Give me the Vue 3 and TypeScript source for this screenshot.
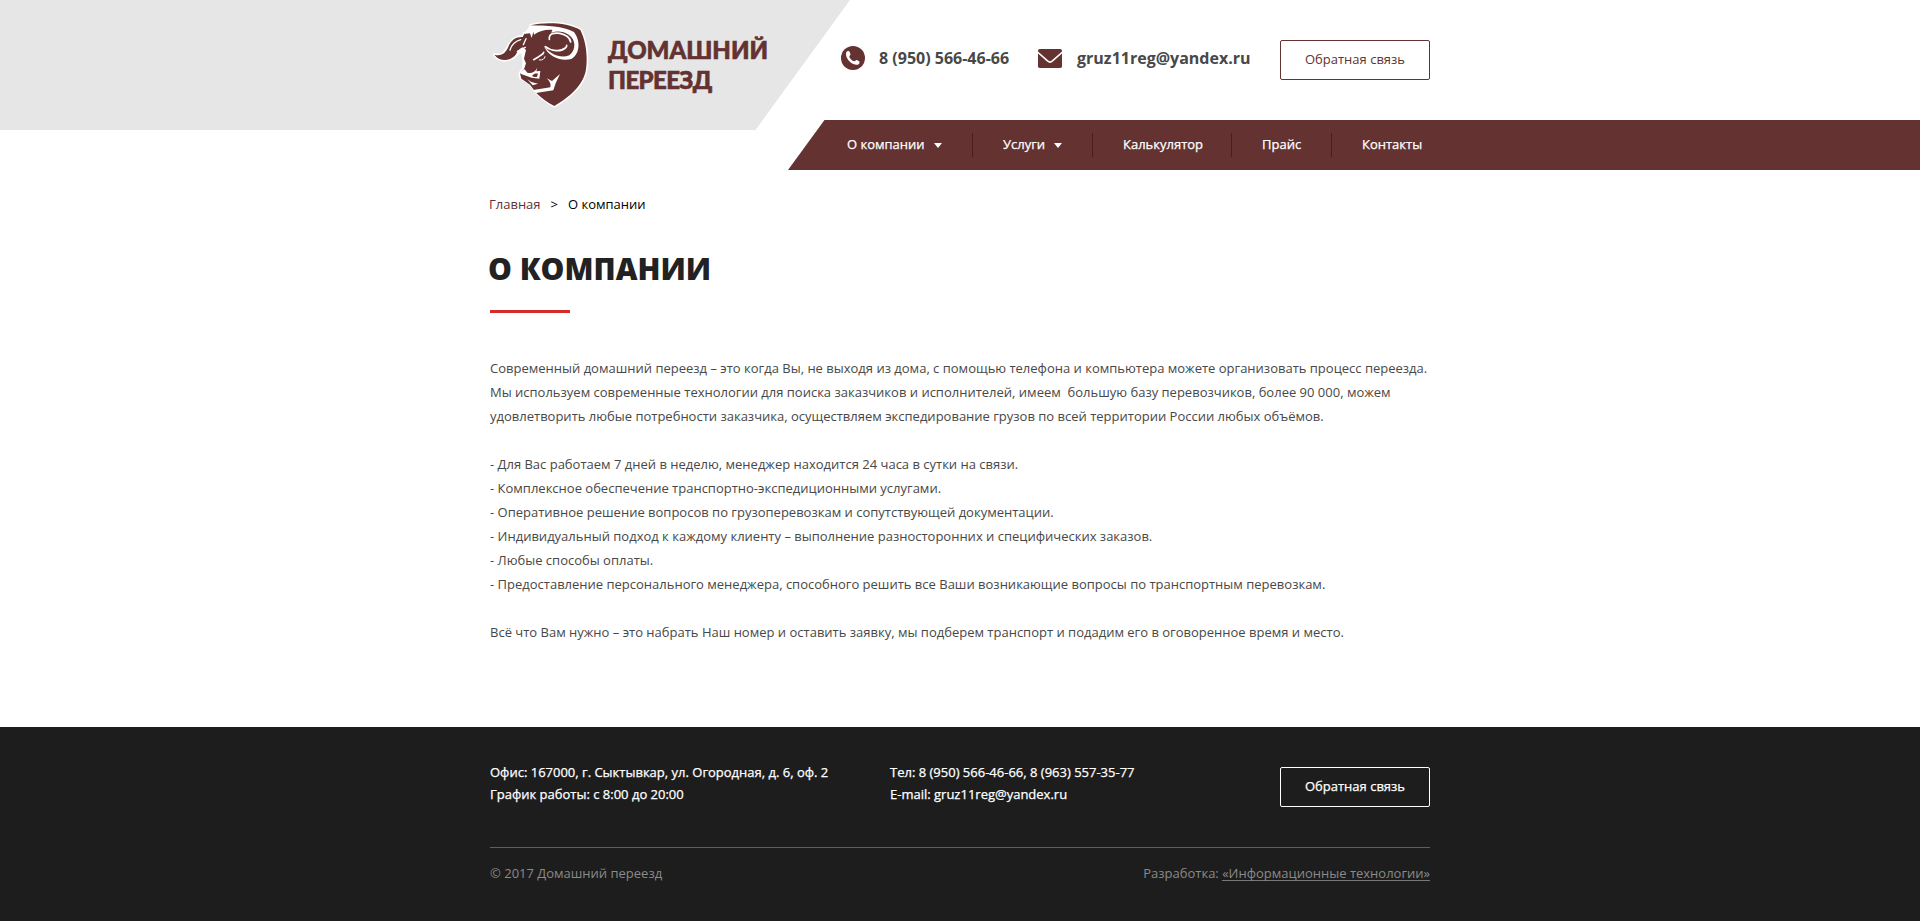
<script setup lang="ts">
interface NavItem { label: string; menu?: boolean; width: number }

const nav: NavItem[] = [
  { label: 'О компании', menu: true, width: 155 },
  { label: 'Услуги', menu: true, width: 120 },
  { label: 'Калькулятор', width: 139 },
  { label: 'Прайс', width: 100 },
  { label: 'Контакты', width: 120 },
]

const intro: string[] = [
  'Современный домашний переезд – это когда Вы, не выходя из дома, с помощью телефона и компьютера можете организовать процесс переезда.',
  'Мы используем современные технологии для поиска заказчиков и исполнителей, имеем\u00a0 большую базу перевозчиков, более 90 000, можем',
  'удовлетворить любые потребности заказчика, осуществляем экспедирование грузов по всей территории России любых объёмов.',
]

const points: string[] = [
  'Для Вас работаем 7 дней в неделю, менеджер находится 24 часа в сутки на связи.',
  'Комплексное обеспечение транспортно-экспедиционными услугами.',
  'Оперативное решение вопросов по грузоперевозкам и сопутствующей документации.',
  'Индивидуальный подход к каждому клиенту – выполнение разносторонних и специфических заказов.',
  'Любые способы оплаты.',
  'Предоставление персонального менеджера, способного решить все Ваши возникающие вопросы по транспортным перевозкам.',
]
</script>

<template>
  <div class="page">
    <header class="header">
      <div class="plate"></div>
      <div class="ribbon"></div>
      <div class="header-inner">
        <a class="logo">
          <svg class="bull" viewBox="0 0 360 330" width="120" height="110">
            <path fill="#fff" stroke="#fff" stroke-width="9" stroke-linejoin="round" d="M152 46C190 36 262 36 301 60C319 96 323 140 318 178C311 226 268 262 223 288C202 277 184 263 168 245L150 220L122 204L120 190L130 176L132 150L128 126L116 126C92 158 58 156 43 134C66 140 78 128 86 108C94 90 108 80 128 80L134 70L156 66Z" />
            <path fill="#633231" d="M152 46C190 36 262 36 301 60C319 96 323 140 318 178C311 226 268 262 223 288C202 277 184 263 168 248L150 224L124 206L120 190L132 178L138 160L132 146L138 120L128 112C118 116 112 126 106 136C88 156 56 154 43 134C66 140 78 128 86 108C94 90 108 80 128 81L134 70L156 66Z" />
            <path fill="#fff" d="M150 46C200 47 250 48 282 66C304 96 298 134 274 147C240 156 204 138 192 108C212 134 242 146 268 136C290 118 287 88 266 74C250 64 232 62 214 68C215 63 216 62 218 60C200 58 178 62 162 74L160 65L155 84L150 70L132 72Z" />
            <g fill="none" stroke="#fff" stroke-linecap="round" stroke-linejoin="round">
              <path stroke-width="5" d="M208 88C206 70 222 68 240 70C258 74 270 84 272 96" />
              <path stroke-width="5" d="M196 110C214 124 242 126 256 114Q261 110 260 106" />
              <path stroke-width="4" d="M90 120C94 106 106 94 122 89M138 86L130 104M112 124L136 112" />
              <path stroke-width="5" d="M161 149L176 140L188 132L191 127" />
              <path stroke-width="3" d="M178 150C188 151 194 147 195 140" />
            </g>
            <path fill="#fff" d="M118 187L134 178L142 188C154 192 164 187 172 173L169 184L181 183L178 206C164 206 146 202 134 196L123 192ZM142 208L154 216L174 221L158 226ZM168 249L160 240L211 232C214 222 208 212 200 205L216 213L240 192L227 220L220 241Z" />
            <path fill="#633231" d="M156 198C162 190 168 190 174 191L171 200C166 202 160 201 156 198Z" />
          </svg>
          <span class="logo-text">
            <span class="logo-top">ДОМАШНИЙ</span>
            <span class="logo-bottom">ПЕРЕЕЗД</span>
          </span>
        </a>
        <div class="right">
          <div class="contacts">
            <svg class="phone-icon" viewBox="0 0 24 24" width="24" height="24">
              <circle cx="12" cy="12" r="12" fill="#633231" />
              <path fill="#fff" d="M5.4 6C6 5.1 7.5 4.7 8.1 5.2C8.7 5.8 9.5 7.7 9.5 8.4C9.5 9.2 8.2 9.7 8.3 10.5C8.6 12.5 11.3 15 13.3 15.3C14.2 15.4 14.6 13.9 15.6 14C16.5 14.2 18.1 15.2 18.5 15.8C18.9 16.8 17.9 18.3 16.8 18.7C14.6 19.2 11.2 18.2 8.6 15.5C5.4 12.6 4.4 8.2 5.4 6Z" />
            </svg>
            <span class="phone">8 (950) 566-46-66</span>
            <svg class="mail-icon" viewBox="0 0 24 19" width="24" height="19">
              <rect width="24" height="19" rx="1.8" fill="#633231" />
              <path d="M-.5 3L9.5 11.8Q12 14.4 14.5 11.8L24.5 3" fill="none" stroke="#fff" stroke-width="1.6" />
            </svg>
            <span class="mail">gruz11reg@yandex.ru</span>
            <button class="btn" type="button">Обратная связь</button>
          </div>
          <nav class="nav">
            <a v-for="item in nav" :key="item.label" class="nav-item" :style="{ width: item.width + 'px' }">
              {{ item.label }}
              <svg v-if="item.menu" class="caret" width="8" height="5" viewBox="0 0 8 5"><path d="M0 0H8L4 5Z" fill="#fff" /></svg>
            </a>
          </nav>
        </div>
      </div>
    </header>

    <main class="main">
      <div class="crumbs"><a>Главная</a><span class="sep">&gt;</span><span>О компании</span></div>
      <h1>О КОМПАНИИ</h1>
      <div class="rule"></div>
      <div class="copy">
        <p><span v-for="line in intro" :key="line" class="line">{{ line }}</span></p>
        <p><span v-for="point in points" :key="point" class="line">- {{ point }}</span></p>
        <p><span class="line">Всё что Вам нужно – это набрать Наш номер и оставить заявку, мы подберем транспорт и подадим его в оговоренное время и место.</span></p>
      </div>
    </main>

    <footer class="footer">
      <div class="footer-inner">
        <div class="footer-top">
          <div class="office">Офис: 167000, г. Сыктывкар, ул. Огородная, д. 6, оф. 2<br>График работы: с 8:00 до 20:00</div>
          <div class="reach">Тел: 8 (950) 566-46-66, 8 (963) 557-35-77<br>E-mail: gruz11reg@yandex.ru</div>
          <button class="btn light" type="button">Обратная связь</button>
        </div>
        <div class="footer-bottom">
          <span>© 2017 Домашний переезд</span>
          <span>Разработка: <a class="dev">«Информационные технологии»</a></span>
        </div>
      </div>
    </footer>
  </div>
</template>

<style>
body { margin: 0; background: #fff; }
</style>

<style scoped>
.page {
  height: 921px;
  overflow: hidden;
  display: flex;
  flex-direction: column;
  font-family: "Open Sans", "Noto Sans", sans-serif;
  font-size: 13px;
  color: #484848;
}
.header { position: relative; height: 170px; flex: none; }
.plate {
  position: absolute; left: 0; top: 0; width: 850px; height: 130px;
  background: #e6e6e6;
  clip-path: polygon(0 0, 100% 0, 755.5px 100%, 0 100%);
}
.ribbon {
  position: absolute; left: 788px; right: 0; top: 120px; height: 50px;
  background: #633231;
  clip-path: polygon(36.5px 0, 100% 0, 100% 100%, 0 100%);
}
.header-inner, .main, .footer-inner { width: 940px; margin: 0 auto; }
.header-inner { position: relative; display: flex; }
.logo { display: flex; width: 328px; color: #633231; }
.bull { margin: 10px 8px 0 -10px; flex: none; }
.logo-text {
  padding-top: 35px;
  font: 900 24px/30px Lato, "Open Sans", sans-serif;
  white-space: nowrap;
  -webkit-text-stroke: 0.6px #633231;
}
.logo-text span { display: block; }
.logo-bottom { letter-spacing: -0.6px; }
.right { display: flex; flex-direction: column; width: 612px; }
.contacts { display: flex; height: 120px; padding-left: 23px; box-sizing: border-box; }
.phone-icon { margin: 46px 14px 0 0; flex: none; }
.mail-icon { margin: 49px 15px 0 0; flex: none; }
.phone, .mail {
  padding-top: 46px;
  font-size: 16px; line-height: 24px; font-weight: 700;
  color: #484848; white-space: nowrap; flex: none;
}
.phone { width: 159px; }
.btn {
  width: 150px; height: 40px; margin: 40px 0 0 auto; padding: 0 0 2px;
  border: 1px solid #633231; border-radius: 2px;
  background: none; color: #633231;
  font: 13px "Open Sans", sans-serif; flex: none;
}
.nav { display: flex; height: 50px; margin: 0 -22px 0 0; }
.nav-item {
  display: flex; align-items: center; box-sizing: border-box;
  height: 24px; margin-top: 13px; padding: 0 0 2px 29px;
  color: #fff; white-space: nowrap;
  -webkit-text-stroke: 0.25px #fff;
  border-right: 1px solid #4d1d1c;
}
.nav-item + .nav-item { padding-left: 30px; }
.nav-item:last-child { border-right: 0; }
.caret { margin: 3px 0 0 9px; }
.main { height: 557px; flex: none; }
.crumbs { display: flex; padding-top: 24px; margin-left: -1px; line-height: 20px; color: #000; }
.crumbs a { color: #633231; }
.sep { margin: 0 10px; }
h1 {
  margin: 34px 0 0 -2px;
  font-size: 30px; line-height: 42px; font-weight: 800; color: #222;
}
.rule { width: 80px; height: 3px; margin: 20px 0 43px; background: #d52b2b; }
.copy { line-height: 24px; }
.copy p { margin: 0 0 24px; }
.line { display: block; white-space: nowrap; }
.footer { flex: 1; background: #1d1d1d; color: #fff; }
.footer-top {
  display: flex; height: 121px; box-sizing: border-box; padding-top: 34px;
  line-height: 22px; border-bottom: 1px solid #5e5e5e;
  -webkit-text-stroke: 0.25px #fff;
}
.office { width: 400px; }
.btn.light { margin-top: 6px; border-color: #fff; color: #fff; }
.footer-bottom { display: flex; justify-content: space-between; padding-top: 15px; line-height: 20px; color: #8a8a8a; }
.dev { border-bottom: 1px solid #777; display: inline-block; line-height: 14px; }
</style>
